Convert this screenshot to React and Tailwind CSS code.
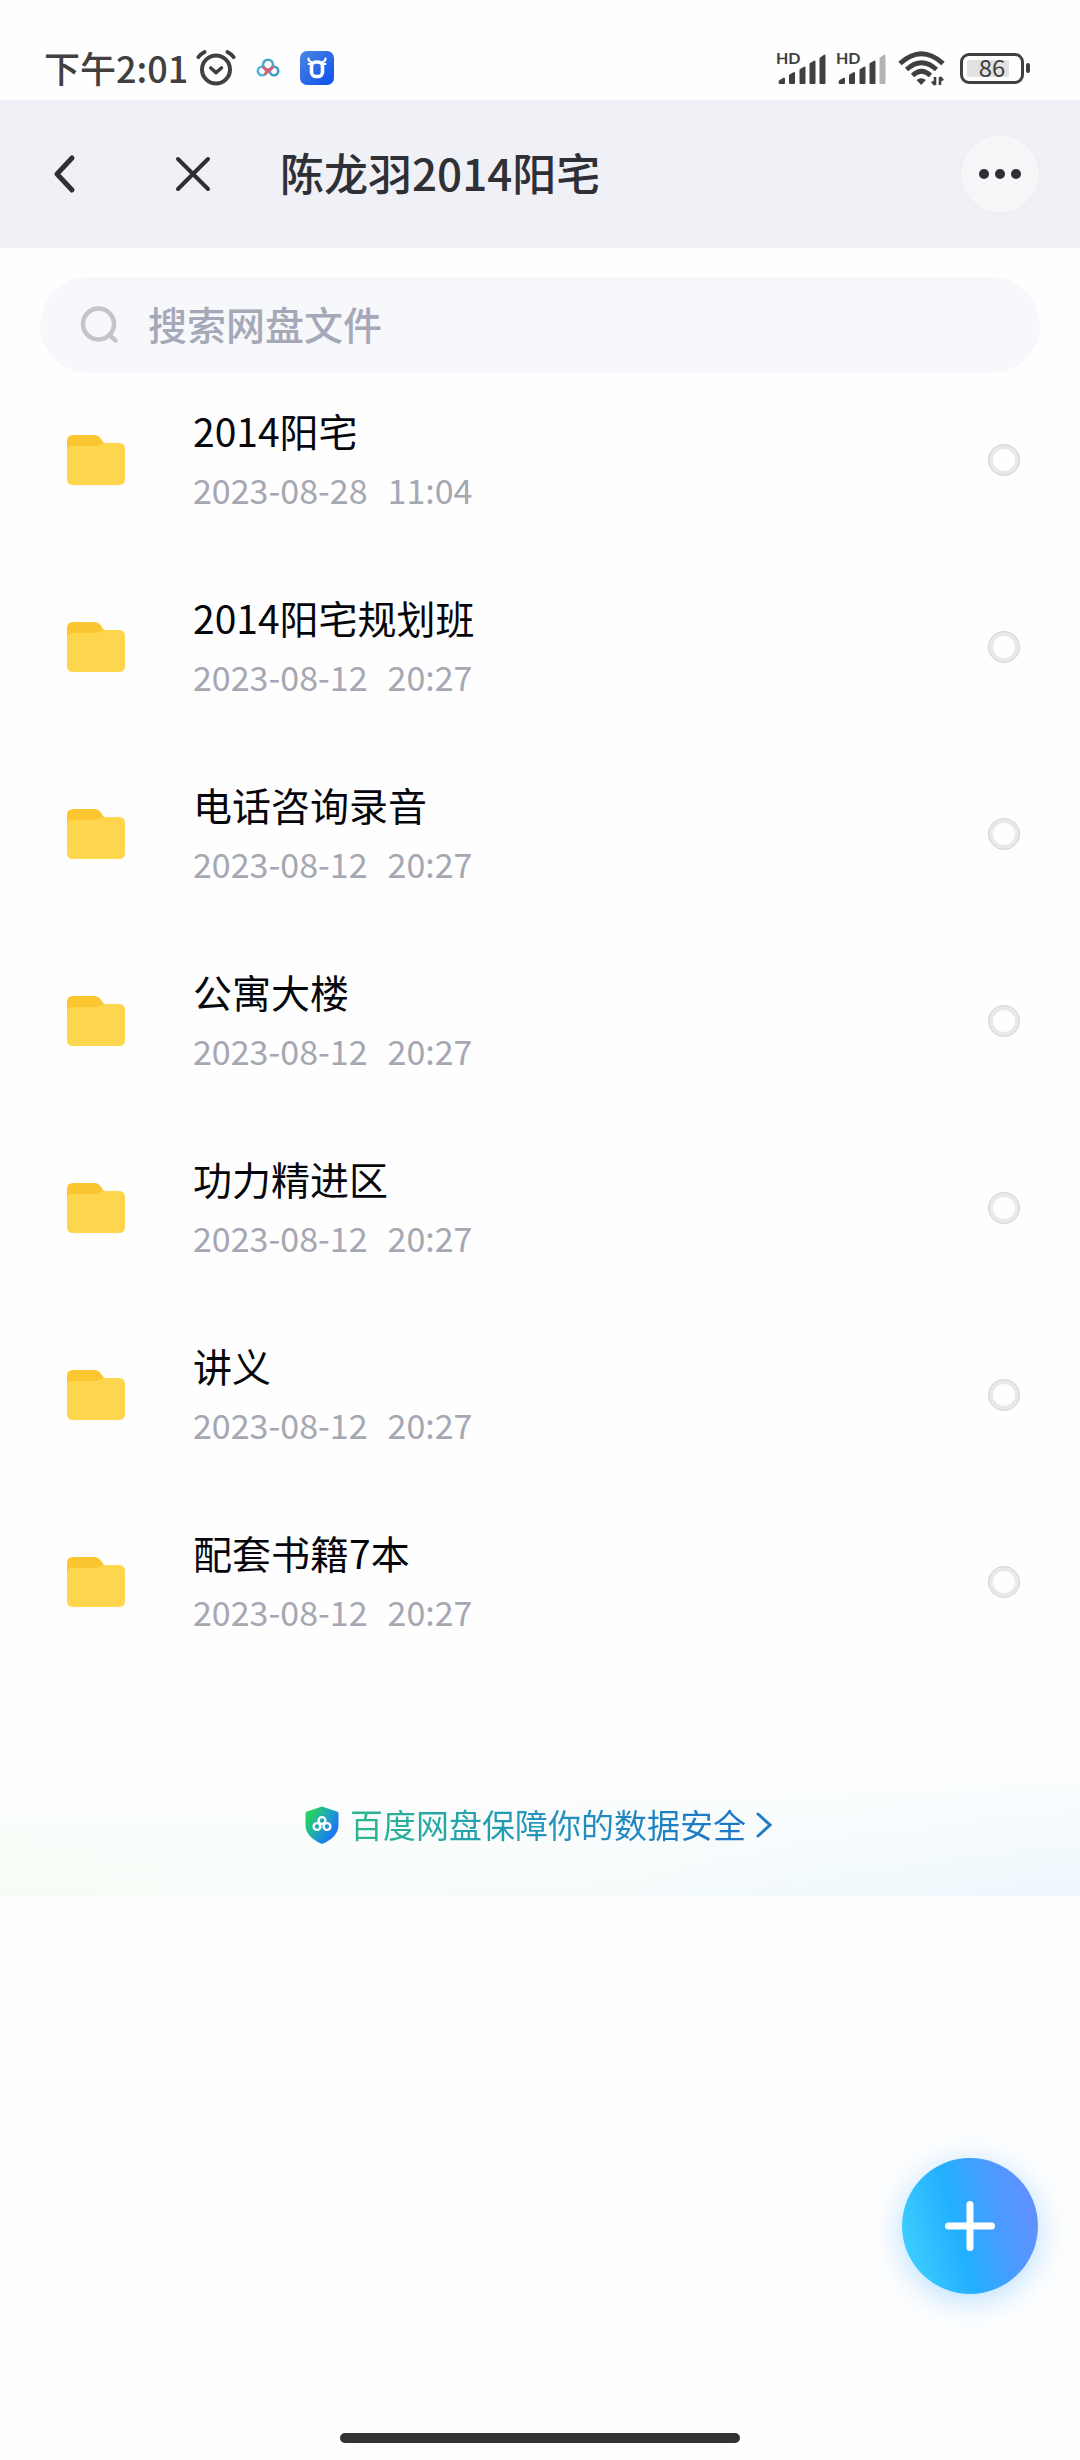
import React, { useState } from "react";

const folders = [
    { name: "2014阳宅", date: "2023-08-28", time: "11:04" },
    { name: "2014阳宅规划班", date: "2023-08-12", time: "20:27" },
    { name: "电话咨询录音", date: "2023-08-12", time: "20:27" },
    { name: "公寓大楼", date: "2023-08-12", time: "20:27" },
    { name: "功力精进区", date: "2023-08-12", time: "20:27" },
    { name: "讲义", date: "2023-08-12", time: "20:27" },
    { name: "配套书籍7本", date: "2023-08-12", time: "20:27" },
]

function AlarmIcon() {
    return (
        <svg width="40" height="36" viewBox="0 0 40 36" fill="none" stroke="#404040" strokeLinecap="round" strokeLinejoin="round">
            <circle cx="20" cy="19.5" r="14" strokeWidth="4" />
            <path d="M14.8 18l5.2 4.6 5.4-4.6" strokeWidth="3.6" />
            <path d="M2.4 7.2C4.2 4.6 5.8 3.4 8.6 2" strokeWidth="3.8" />
            <path d="M37.6 7.2C35.8 4.6 34.2 3.4 31.4 2" strokeWidth="3.8" />
        </svg>
    )
}

function CloudDiskIcon() {
    return (
        <svg width="24" height="20" viewBox="0 0 24 20" fill="none" strokeWidth="2.6" strokeLinecap="round">
            <circle cx="6" cy="13" r="4.2" stroke="#4fb8dc" />
            <circle cx="18" cy="13" r="4.2" stroke="#3f9cc4" />
            <circle cx="12" cy="6.8" r="5" stroke="#4aa9bd" />
            <path d="M7.6 9.4a5 5 0 0 0 8.8 0" stroke="#dc5c70" />
            <path d="M14.4 11.4l-5 4.600" stroke="#dc5c70" />
        </svg>
    )
}

function BullAppIcon() {
    return (
        <svg width="34" height="34" viewBox="0 0 34 34">
            <defs>
                <linearGradient id="bull" x1="0" y1="0" x2="1" y2="1">
                    <stop offset="0" stopColor="#4a86e0" />
                    <stop offset="1" stopColor="#0d4ff0" />
                </linearGradient>
            </defs>
            <rect width="34" height="34" rx="7" fill="url(#bull)" />
            <g fill="none" stroke="#fff" strokeLinecap="round" strokeLinejoin="round">
                <rect x="11.5" y="11" width="11" height="14.5" rx="4.5" strokeWidth="3.6" />
                <path d="M8.5 7.5q0 3 3 3.500M25.500 7.500q0 3-3 3.500" strokeWidth="2.2" />
                <path d="M8.5 13h2M23.500 13h2" strokeWidth="1.8" />
            </g>
        </svg>
    )
}

function SignalIcon({ weak }) {
    return (
        <div className="relative w-[50px] h-9">
            <span className="absolute top-0 left-0 text-base leading-4 font-bold font-['Lato',sans-serif]">HD</span>
            <svg width="50" height="36" viewBox="0 0 50 36" fill="#404040">
                <path d="M3 30.5l4.5-2.7q1.5-.6 1.5 1V33q0 1-1 1H4q-1.5 0-1.5-1.5z" />
                <path d="M13 25.5q0-.8 1-1.3l3.5-2q1.5-.6 1.5 1V33q0 1-1 1h-4q-1 0-1-1z" />
                <path d="M23.5 20q0-.8 1-1.3l3.5-2q1.5-.6 1.5 1V33q0 1-1 1h-4q-1 0-1-1z" />
                <path d="M33.5 14q0-.8 1-1.3l3.5-2q1.5-.6 1.5 1V33q0 1-1 1h-4q-1 0-1-1z" />
                <path d="M43.5 8.500q0-.8 1-1.3l3.5-2.500q1.5-.6 1.5 1V33q0 1-1 1h-4q-1 0-1-1z" fill={weak ? "#b3b3b3" : "#404040"} />
            </svg>
        </div>
    )
}

function WifiIcon() {
    return (
        <svg width="48" height="36" viewBox="0 0 48 36" fill="none" stroke="#404040">
            <path d="M2 13.5Q23.5 -6 45 13.5" strokeWidth="5" />
            <path d="M8.5 19.5Q23.5 6 38.5 19.5" strokeWidth="4.6" />
            <path d="M14.5 25.5Q23.5 17 32.5 25.5" strokeWidth="4.6" />
            <path d="M18.5 30q4.7-3.6 9.4 0l-4.7 5z" fill="#404040" stroke="none" />
            <path d="M37 27v8M34 31.5l3 3.5M42 35v-8M45 30.5l-3-3.5" strokeWidth="2.6" />
        </svg>
    )
}

function BatteryIcon() {
    return (
        <div className="flex items-center gap-[2px]">
            <div className="relative w-16 h-[31px] rounded-[9px] border-[3px] border-[#404040] flex items-center justify-center">
                <div className="absolute left-1 top-1 w-[42px] h-[17px] rounded-xs bg-[#e2e2e2]"></div>
                <span className="relative text-[24px] leading-6 pb-[2px]">86</span>
            </div>
            <div className="w-1 h-[10px] rounded-sm bg-[#404040]"></div>
        </div>
    )
}

function StatusBar() {
    return (
        <div className="h-[100px] pt-9 pl-11 pr-[50px] flex justify-between items-center text-[#404040]">
            <div className="flex items-center">
                <span className="text-4xl font-medium pb-[2px]">下午2:01</span>
                <div className="ml-2"><AlarmIcon /></div>
                <div className="ml-5"><CloudDiskIcon /></div>
                <div className="ml-5"><BullAppIcon /></div>
            </div>
            <div className="flex items-center">
                <SignalIcon />
                <div className="ml-[10px]"><SignalIcon weak /></div>
                <div className="ml-3 mr-[14px]"><WifiIcon /></div>
                <BatteryIcon />
            </div>
        </div>
    )
}

function Header() {
    return (
        <header className="h-[148px] bg-[#f0f1f6] px-10 flex items-center text-[#2f3035]">
            <button aria-label="返回" className="w-12 h-12 flex items-center justify-center">
                <svg width="24" height="40" viewBox="0 0 24 40" fill="none" stroke="currentColor" strokeWidth="5" strokeLinecap="round" strokeLinejoin="round">
                    <path d="M20 4L5 20 20 36" />
                </svg>
            </button>
            <button aria-label="关闭" className="ml-20 w-12 h-12 flex items-center justify-center">
                <svg width="40" height="40" viewBox="0 0 40 40" fill="none" stroke="currentColor" strokeWidth="4" strokeLinecap="round">
                    <path d="M6 5l30 30M36 5L6 35" />
                </svg>
            </button>
            <h1 className="ml-16 pb-1 flex-1 text-[44px] leading-[56px] font-medium">陈龙羽2014阳宅</h1>
            <button aria-label="更多" className="w-20 h-20 rounded-full border border-[#ececef] bg-[#f6f6f9] flex items-center justify-center gap-[6px]">
                <span className="w-[10px] h-[10px] rounded-full bg-[#2f3035]"></span>
                <span className="w-[10px] h-[10px] rounded-full bg-[#2f3035]"></span>
                <span className="w-[10px] h-[10px] rounded-full bg-[#2f3035]"></span>
            </button>
        </header>
    )
}

function FolderIcon() {
    return (
        <svg width="60" height="52" viewBox="0 0 60 52">
            <path d="M1 7q0-6 6-6h22q3 0 5 2.5l4 5.5v20H1z" fill="#fbc62f" />
            <path d="M1 17q0-5 5-5h22q4 0 6-1.5 2-1.5 5-1.5h14q6 0 6 6v30q0 6-6 6H7q-6 0-6-6z" fill="#fdd64d" />
        </svg>
    )
}

function FolderRow({ folder, checked, onToggle }) {
    return (
        <li>
            <label className="flex items-center">
                <FolderIcon />
                <div className="ml-[67px] flex-1 pb-1">
                    <div className="text-[39px] leading-[52px] text-[#06070c]">{folder.name}</div>
                    <div className="mt-3 flex gap-5 text-[34px] leading-[44px] text-[#a5a8b2]">
                        <span>{folder.date}</span>
                        <span>{folder.time}</span>
                    </div>
                </div>
                <input type="checkbox" checked={checked} onChange={onToggle}
                    className="appearance-none w-8 h-8 rounded-full border-[5px] border-[#e9e9eb] outline-1 -outline-offset-1 outline-[#d6d6d8] checked:border-[#2a8cff]" />
            </label>
        </li>
    )
}

function ShieldIcon() {
    return (
        <svg width="36" height="40" viewBox="0 0 36 40">
            <defs>
                <linearGradient id="shield" x1="0" y1="0.1" x2="1" y2="0.8">
                    <stop offset="0.15" stopColor="#25cf62" />
                    <stop offset="0.5" stopColor="#1fa8b8" />
                    <stop offset="0.8" stopColor="#1c7cf0" />
                </linearGradient>
            </defs>
            <path d="M18 1.5l15 5q1.5.6 1.5 2V20q0 12-16.5 19Q1.5 32 1.5 20V8.5q0-1.4 1.5-2z" fill="url(#shield)" />
            <g fill="none" stroke="#fff" strokeWidth="2.4">
                <circle cx="18" cy="15.5" r="3.4" />
                <circle cx="13" cy="21.5" r="3.4" />
                <circle cx="23" cy="21.5" r="3.4" />
            </g>
        </svg>
    )
}

function App() {
    const [selected, setSelected] = useState([])

    const toggle = (name) => {
        setSelected(selected.includes(name) ? selected.filter((n) => n !== name) : [...selected, name])
    }

    return (
        <div className="min-h-screen flex flex-col bg-[#fefefe] font-['Noto_Sans_CJK_SC',sans-serif]">
            <StatusBar />
            <Header />

            <label className="mx-10 mt-[29px] h-24 rounded-full bg-[#f7f8fc] pl-10 pr-10 flex items-center">
                <svg width="40" height="40" viewBox="0 0 40 40" fill="none" stroke="#c4c5c9" strokeWidth="4.5" strokeLinecap="round">
                    <circle cx="18.5" cy="19" r="15.5" />
                    <path d="M31 31.5l4.5 4" />
                </svg>
                <input type="text" placeholder="搜索网盘文件" aria-label="搜索网盘文件"
                    className="ml-7 pb-1 flex-1 min-w-0 bg-transparent outline-none text-[39px] leading-[52px] font-medium placeholder:text-[#a5a8b6]" />
            </label>

            <ul className="mt-[31px] pl-[66px] pr-[60px] flex flex-col gap-[75px]">
                {folders.map((folder) => (
                    <FolderRow key={folder.name} folder={folder} checked={selected.includes(folder.name)} onToggle={() => toggle(folder.name)} />
                ))}
            </ul>

            <footer className="mt-[116px] h-[142px] bg-linear-to-r from-[#f6fdf6] via-[#f7fcfb] to-[#edf7fd]">
                <div className="h-full pr-1 bg-linear-to-b from-[#fefefe] to-transparent flex items-center justify-center">
                    <a href="#" className="flex items-center">
                        <ShieldIcon />
                        <span className="ml-[10px] pb-[2px] text-[33px] leading-[44px] bg-linear-to-r from-[#2cb88f] via-[#2493bd] to-[#1e74c8] bg-clip-text text-transparent">百度网盘保障你的数据安全</span>
                        <svg width="16" height="28" viewBox="0 0 16 28" fill="none" stroke="#1e7cc6" strokeWidth="3" strokeLinecap="round" className="ml-[10px]">
                            <path d="M2 3l12 11L2 25" />
                        </svg>
                    </a>
                </div>
            </footer>

            <button aria-label="添加"
                className="fixed right-[42px] bottom-[166px] w-[136px] h-[136px] rounded-full bg-[linear-gradient(75deg,#43d5ff_0%,#22b0ff_42%,#4a9bff_68%,#6a8bff_100%)] shadow-[0_6px_32px_rgba(50,160,255,0.35)] flex items-center justify-center">
                <svg width="52" height="52" viewBox="0 0 52 52" fill="none" stroke="#fff" strokeWidth="7" strokeLinecap="round">
                    <path d="M26 4.5v43M4.5 26h43" />
                </svg>
            </button>

            <div className="mt-auto mb-[17px] self-center w-[37%] h-[10px] rounded-full bg-[#333]"></div>
        </div>
    )
}

export default App
